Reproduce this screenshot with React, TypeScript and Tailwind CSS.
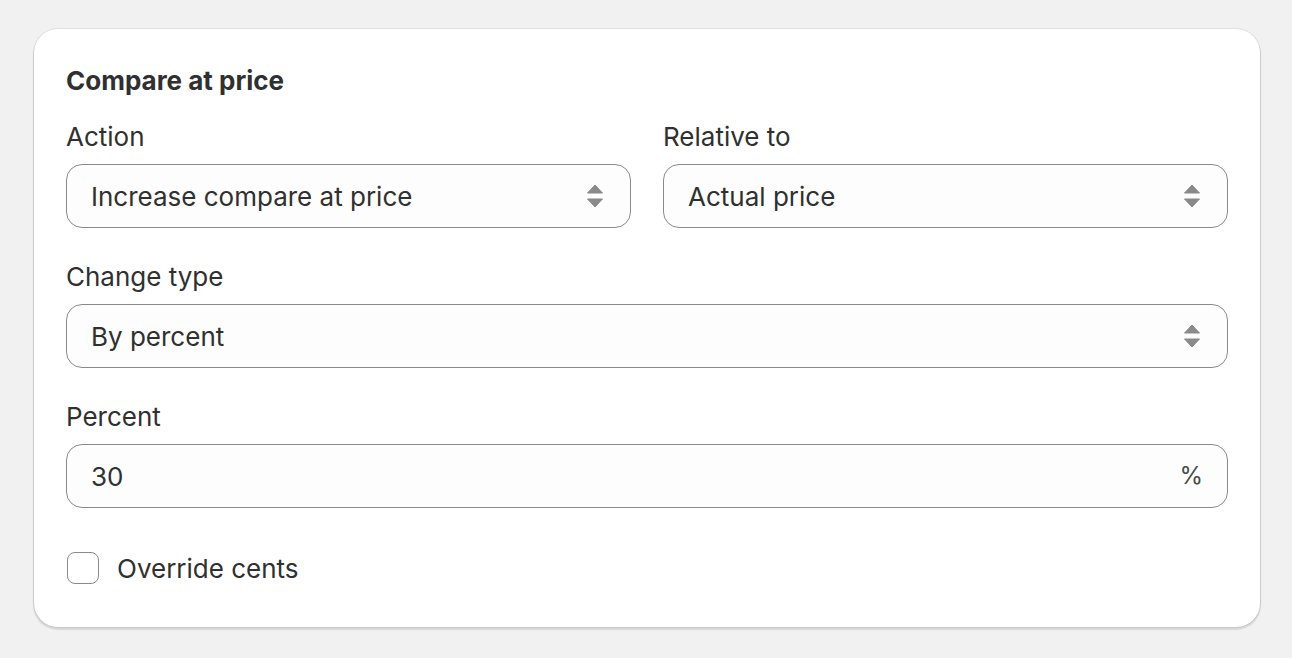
import React from 'react';

function UpDown() {
  return (
    <svg width="18" height="26" viewBox="0 0 18 26" className="shrink-0">
      <path d="M9 2 L16.5 10 L1.5 10 Z" fill="#8a8a8a" strokeLinejoin="round" stroke="#8a8a8a" strokeWidth="1" />
      <path d="M9 24 L16.5 16 L1.5 16 Z" fill="#8a8a8a" strokeLinejoin="round" stroke="#8a8a8a" strokeWidth="1" />
    </svg>
  );
}

function Label({ children, className = '' }: { children: React.ReactNode; className?: string }) {
  return <div className={`text-[26px] leading-[40px] text-[#303030] ${className}`}>{children}</div>;
}

function SelectBox({ value }: { value: string }) {
  return (
    <div className="flex h-16 items-center justify-between rounded-2xl border border-[#8a8a8a] bg-[#fdfdfd] pl-6 pr-[26px]">
      <span className="text-[26px] text-[#303030]">{value}</span>
      <UpDown />
    </div>
  );
}

export default function App() {
  return (
    <div
      className="min-h-screen bg-[#f1f1f1] pl-[34px] pr-8 pt-[29px]"
      style={{ fontFamily: 'Inter, "Liberation Sans", sans-serif' }}
    >
      <div className="rounded-[24px] bg-white px-8 pt-8 pb-[39px] shadow-[0_0_0_1px_rgba(0,0,0,0.07),0_2px_1px_1px_rgba(0,0,0,0.1)]">
        <h2 className="text-[26px] leading-[40px] font-[650] text-[#303030]">Compare at price</h2>

        <div className="mt-4 grid grid-cols-2 gap-8">
          <div>
            <Label className="mb-[7px]">Action</Label>
            <SelectBox value="Increase compare at price" />
          </div>
          <div>
            <Label className="mb-[7px]">Relative to</Label>
            <SelectBox value="Actual price" />
          </div>
        </div>

        <div className="mt-[29px]">
          <Label className="mb-[7px]">Change type</Label>
          <SelectBox value="By percent" />
        </div>

        <div className="mt-[29px]">
          <Label className="mb-[7px]">Percent</Label>
          <div className="flex h-16 items-center justify-between rounded-2xl border border-[#8a8a8a] bg-[#fdfdfd] pl-6 pr-6">
            <span className="text-[26px] text-[#303030]">30</span>
            <span className="text-[24px] text-[#4a4a4a]">%</span>
          </div>
        </div>

        <label className="mt-10 flex h-10 items-center">
          <span className="ml-px block h-8 w-8 rounded-lg border-[1.5px] border-[#8a8a8a] bg-white" />
          <span className="ml-[18px] text-[26px] text-[#303030]">Override cents</span>
        </label>
      </div>
    </div>
  );
}
